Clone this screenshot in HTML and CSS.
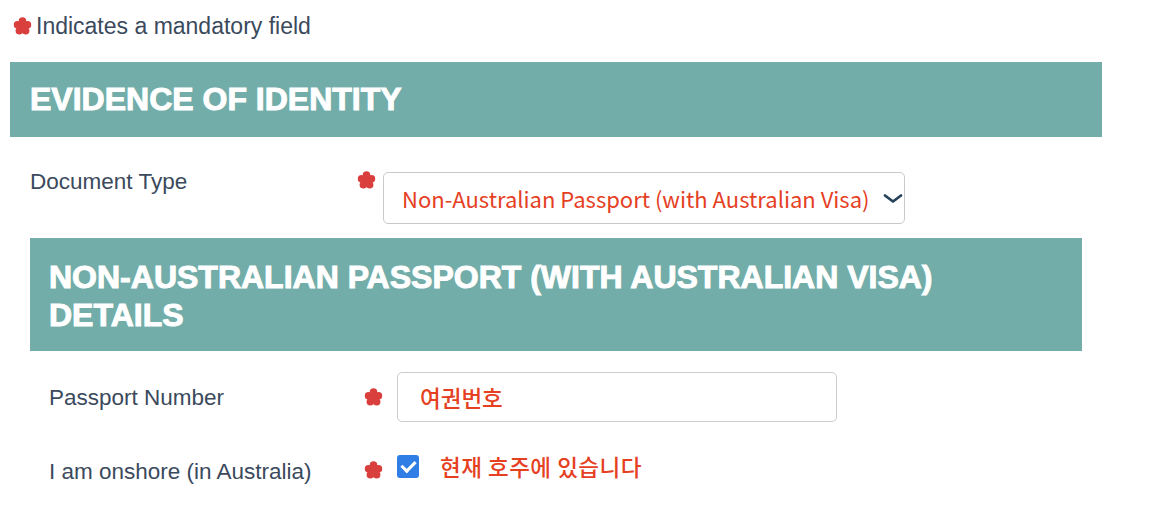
FILE: index.html
```html
<!DOCTYPE html>
<html lang="en">
<head>
    <meta charset="UTF-8">
    <meta name="viewport" content="width=device-width, initial-scale=1.0">
    <title>Evidence of Identity</title>
    <link rel="stylesheet" href="styles.css">
</head>
<body>
    <p class="mandatory-note">
        <svg class="req" viewBox="0 0 20 20" aria-hidden="true"><use href="#star"/></svg>
        Indicates a mandatory field
    </p>

    <svg width="0" height="0" class="defs">
        <symbol id="star" viewBox="0 0 20 20">
            <circle cx="10" cy="10.8" r="5"/>
            <circle cx="10" cy="4.6" r="4.2"/>
            <circle cx="15.6" cy="8.6" r="4.2"/>
            <circle cx="13.5" cy="15.3" r="4.2"/>
            <circle cx="6.5" cy="15.3" r="4.2"/>
            <circle cx="4.4" cy="8.6" r="4.2"/>
        </symbol>
    </svg>

    <section class="section">
        <h2 class="section-title">EVIDENCE OF IDENTITY</h2>

        <div class="field-row doc-row">
            <label for="docType" class="field-label">Document Type</label>
            <svg class="req" viewBox="0 0 20 20" aria-hidden="true"><use href="#star"/></svg>
            <div class="select-wrap">
                <select id="docType" class="select">
                    <option>Non-Australian Passport (with Australian Visa)</option>
                </select>
                <svg class="chevron" viewBox="0 0 20 10" aria-hidden="true">
                    <path d="M2 2 L10 8 L18 2"/>
                </svg>
            </div>
        </div>

        <section class="section sub-section">
            <h2 class="section-title two-line">NON-AUSTRALIAN PASSPORT (WITH AUSTRALIAN VISA) DETAILS</h2>

            <div class="field-row inner-row passport-row">
                <label for="passportNo" class="field-label">Passport Number</label>
                <svg class="req" viewBox="0 0 20 20" aria-hidden="true"><use href="#star"/></svg>
                <input type="text" id="passportNo" class="text-input" value="여권번호">
            </div>

            <div class="field-row inner-row onshore-row">
                <label for="onshore" class="field-label">I am onshore (in Australia)</label>
                <svg class="req" viewBox="0 0 20 20" aria-hidden="true"><use href="#star"/></svg>
                <div class="check">
                    <input type="checkbox" id="onshore" class="checkbox" checked>
                    <span class="check-text">현재 호주에 있습니다</span>
                </div>
            </div>
        </section>
    </section>
</body>
</html>
```

FILE: styles.css
```css
* {
    margin: 0;
    padding: 0;
    box-sizing: border-box;
}

body {
    background: #fff;
    font-family: 'Liberation Sans', Arial, sans-serif;
    color: #3b4a5d;
    width: 1150px;
    height: 520px;
    overflow: hidden;
}

.defs {
    position: absolute;
}

.req {
    width: 19px;
    height: 18px;
    fill: #d9403d;
    flex: none;
}

.mandatory-note {
    display: flex;
    align-items: center;
    gap: 4px;
    padding: 13px 0 0 13px;
    font-size: 23px;
    line-height: 26px;
}

.section {
    margin: 23px 0 0 10px;
    width: 1092px;
}

.section-title {
    background: #72ada9;
    color: #fff;
    font-size: 32px;
    font-weight: 700;
    line-height: 75px;
    padding: 0 20px;
    -webkit-text-stroke: 1px #fff;
}

.section-title.two-line {
    line-height: 38px;
    padding: 20px 40px 17px 19px;
}

.field-row {
    display: grid;
    grid-template-columns: 327px 26px auto;
    align-items: start;
    padding-left: 20px;
}

.field-label {
    font-size: 22.5px;
    line-height: 26px;
}

.doc-row {
    margin-top: 30px;
}

.doc-row .field-label {
    margin-top: 2px;
}

.doc-row .req {
    margin-top: 4px;
}

.select-wrap {
    position: relative;
    width: 522px;
    margin-top: 5px;
}

.select {
    appearance: none;
    -webkit-appearance: none;
    width: 100%;
    height: 52px;
    padding: 0 28px 0 18px;
    border: 1px solid #c9c9c9;
    border-radius: 5px;
    background: #fff;
    color: #e5401f;
    font-family: 'Noto Sans CJK KR', sans-serif;
    font-size: 22px;
    outline: none;
}

.chevron {
    position: absolute;
    right: 2px;
    top: 21px;
    width: 20px;
    height: 11px;
    fill: none;
    stroke: #27435c;
    stroke-width: 2.8;
    stroke-linecap: round;
    stroke-linejoin: round;
}

.sub-section {
    margin: 14px 0 0 20px;
    width: 1052px;
}

.inner-row {
    grid-template-columns: 315px 33px auto;
    padding-left: 19px;
}

.passport-row {
    margin-top: 21px;
    align-items: center;
}

.passport-row .field-label {
    margin-top: 2px;
}

.text-input {
    width: 440px;
    height: 50px;
    padding: 0 22px;
    border: 1px solid #cdcdcd;
    border-radius: 5px;
    color: #e5401f;
    font-family: 'Noto Sans CJK KR', sans-serif;
    font-size: 22.5px;
    font-weight: 500;
    outline: none;
}

.onshore-row {
    margin-top: 32px;
}

.onshore-row .field-label {
    margin-top: 5px;
}

.onshore-row .req {
    margin-top: 7px;
}

.check {
    display: flex;
    align-items: center;
    gap: 21px;
}

.checkbox {
    appearance: none;
    -webkit-appearance: none;
    position: relative;
    width: 22px;
    height: 23px;
    border-radius: 3px;
    background: #2f7ee6;
    flex: none;
}

.checkbox::after {
    content: '';
    position: absolute;
    left: 7px;
    top: 3px;
    width: 6px;
    height: 11px;
    border: solid #fff;
    border-width: 0 3px 3px 0;
    transform: rotate(45deg);
}

.check-text {
    color: #e5401f;
    font-family: 'Noto Sans CJK KR', sans-serif;
    font-size: 22.5px;
    font-weight: 500;
    line-height: 24px;
    letter-spacing: 0.5px;
}
```
